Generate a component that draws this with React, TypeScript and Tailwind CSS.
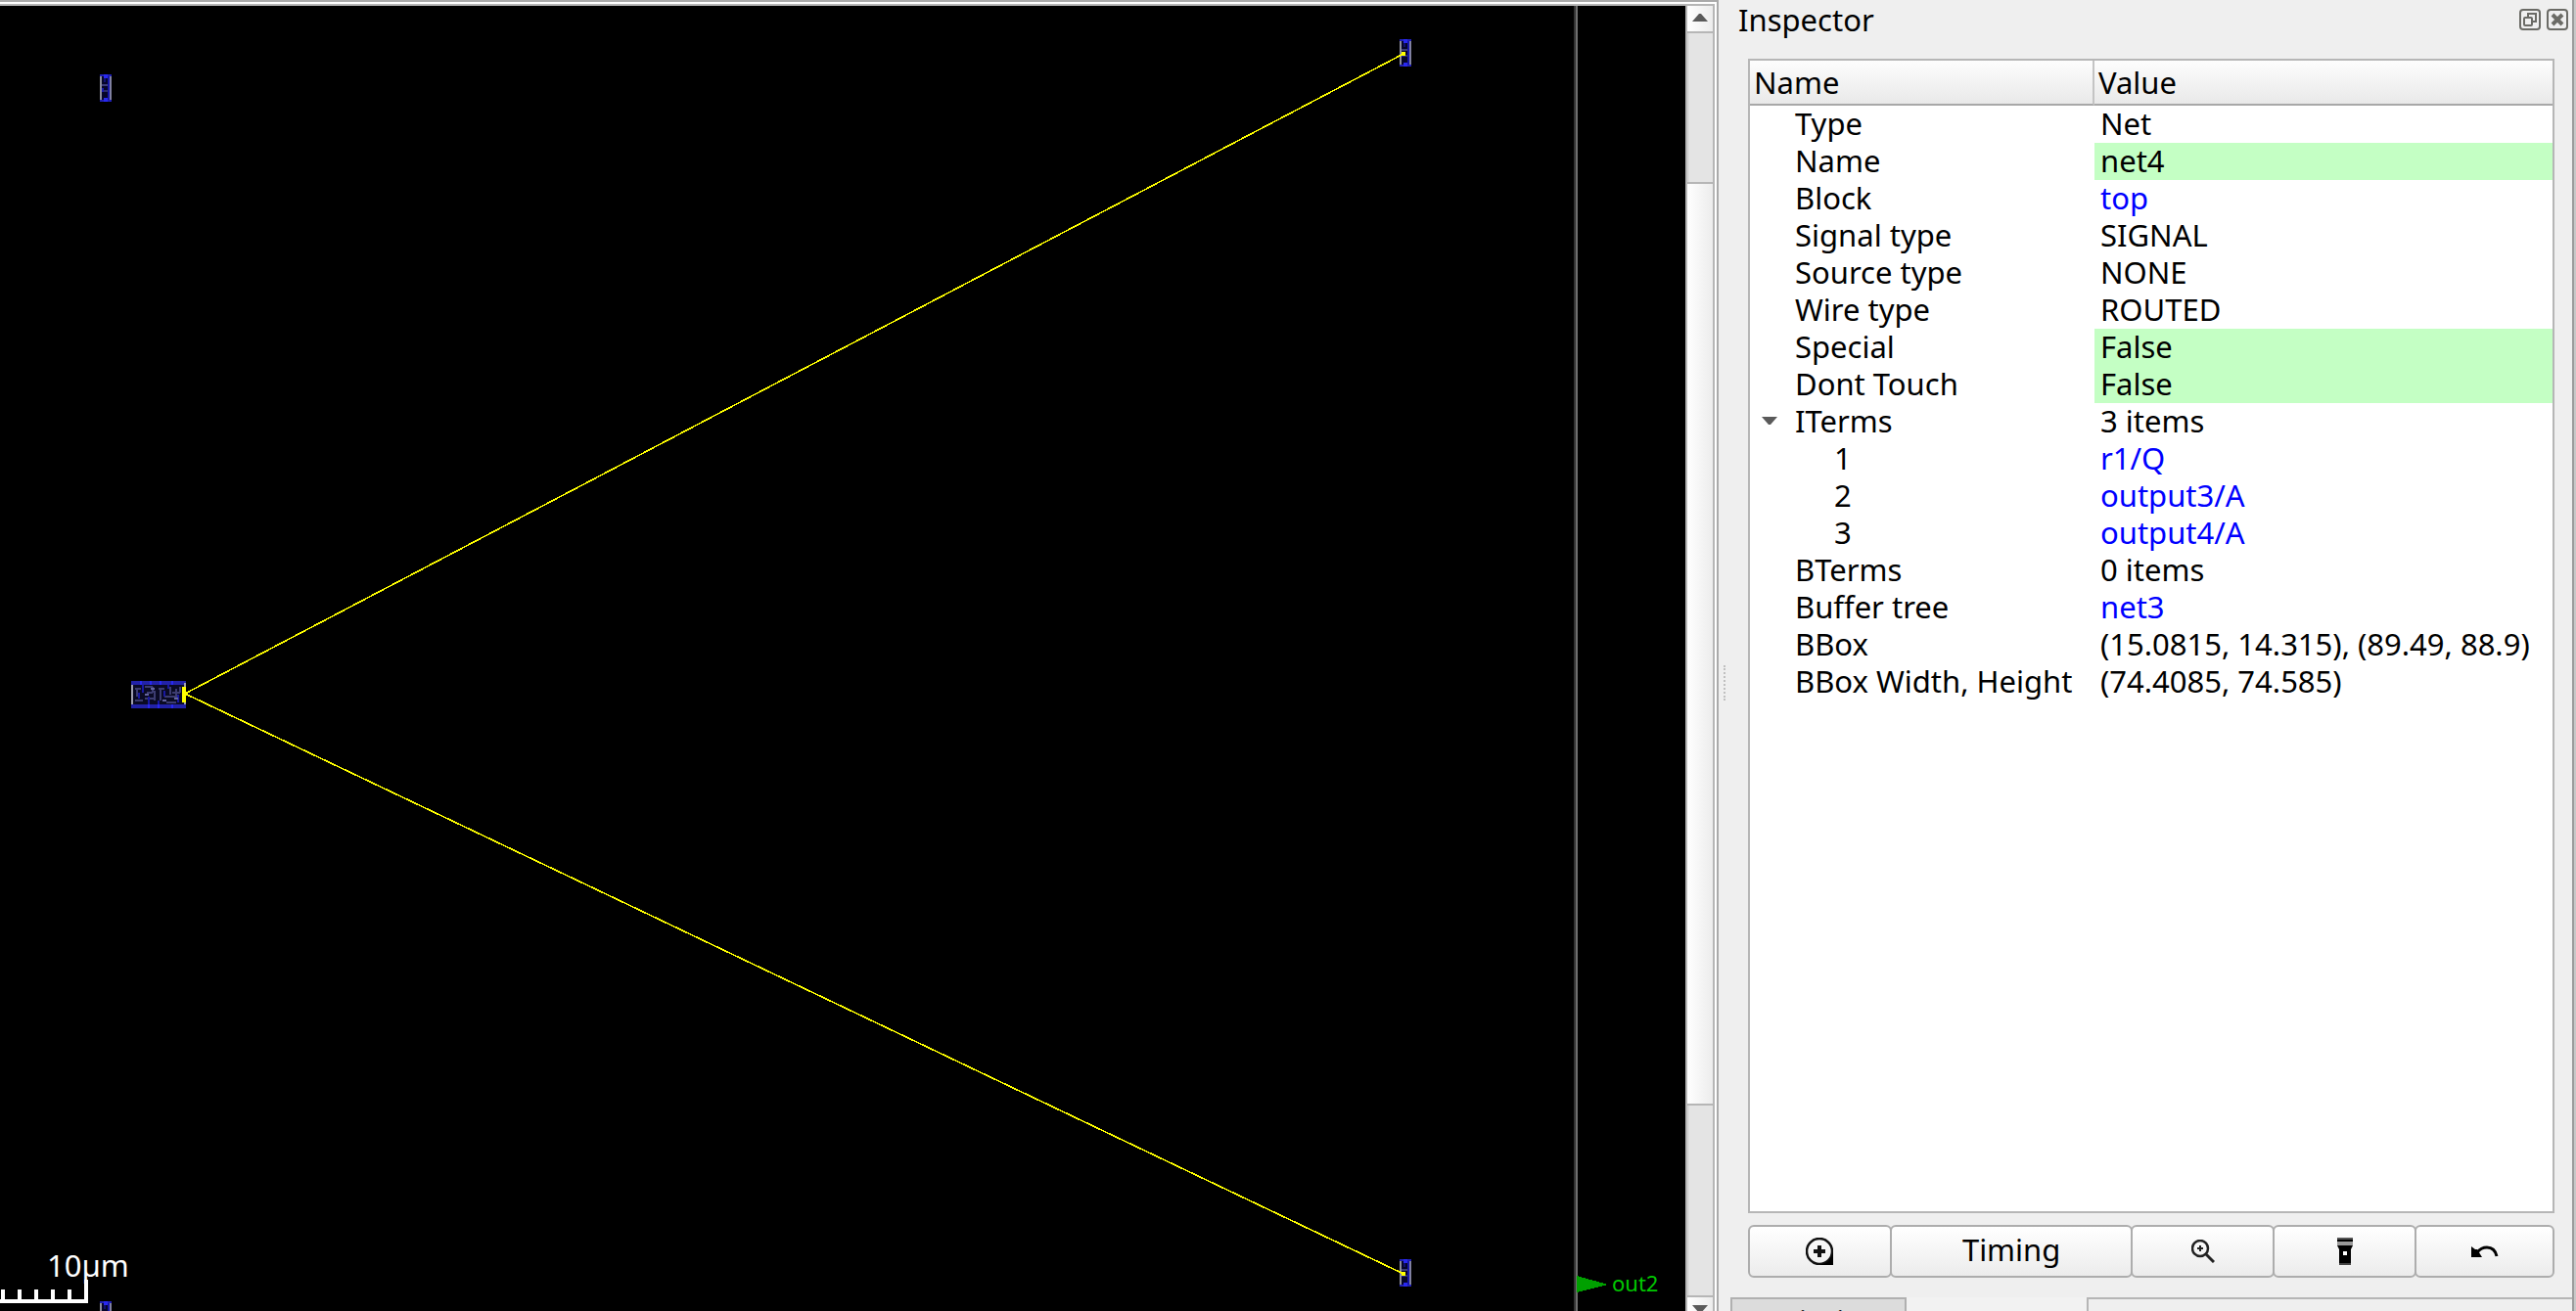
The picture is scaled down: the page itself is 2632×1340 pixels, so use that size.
import { useState } from 'react';
import type { ReactNode } from 'react';

type Row = {
  name: string;
  value: string;
  link?: boolean;
  editable?: boolean;
  child?: boolean;
  parent?: boolean;
};

const rows: Row[] = [
  { name: 'Type', value: 'Net' },
  { name: 'Name', value: 'net4', editable: true },
  { name: 'Block', value: 'top', link: true },
  { name: 'Signal type', value: 'SIGNAL' },
  { name: 'Source type', value: 'NONE' },
  { name: 'Wire type', value: 'ROUTED' },
  { name: 'Special', value: 'False', editable: true },
  { name: 'Dont Touch', value: 'False', editable: true },
  { name: 'ITerms', value: '3 items', parent: true },
  { name: '1', value: 'r1/Q', link: true, child: true },
  { name: '2', value: 'output3/A', link: true, child: true },
  { name: '3', value: 'output4/A', link: true, child: true },
  { name: 'BTerms', value: '0 items' },
  { name: 'Buffer tree', value: 'net3', link: true },
  { name: 'BBox', value: '(15.0815, 14.315), (89.49, 88.9)' },
  { name: 'BBox Width, Height', value: '(74.4085, 74.585)' },
];

/* Small buffer cell, 12 x 28 */
function Cell({ x, y }: { x: number; y: number }) {
  return (
    <g transform={`translate(${x} ${y})`}>
      <rect width="12" height="28" fill="#05052a" />
      <rect x="8" y="2" width="2" height="24" fill="#1414a8" />
      <rect x="4" y="4" width="2" height="4" fill="#10106e" />
      <rect x="2" y="10" width="6" height="2" fill="#3c3c78" />
      <rect x="2" y="14" width="2" height="4" fill="#1818b0" />
      <rect x="4" y="16" width="4" height="2" fill="#2c2c64" />
      <rect x="0" y="2" width="2" height="24" fill="#8c8c9c" />
      <rect x="10" y="2" width="2" height="24" fill="#8080a0" />
      <rect width="12" height="2" fill="#2020b4" />
      <rect y="26" width="12" height="2" fill="#2020b4" />
      <rect x="4" y="0" width="4" height="4" fill="#2828f0" />
      <rect x="4" y="24" width="4" height="4" fill="#2828f0" />
    </g>
  );
}

function FlipFlop({ x, y }: { x: number; y: number }) {
  return (
    <g transform={`translate(${x} ${y})`}>
      <rect width="56" height="28" fill="#0a0a24" />
      <path d="M4 8h6M6 8v8M4 20h8M14 6h8M16 12h6M22 6v6M14 18h10M24 10v10M28 8h6M30 8v12M34 16h12M40 6v8M46 8v10M36 22h10M50 6v6M42 12h8" stroke="#3c3c70" strokeWidth="2" fill="none" />
      <path d="M12 4v8M18 16v8M28 20v4M38 4v4M34 10v6M48 14v8M8 12v6" stroke="#1818a0" strokeWidth="2" fill="none" />
      <path d="M14 14h4M20 8h4M32 20h4M44 18h4" stroke="#6464a0" strokeWidth="2" fill="none" />
      <rect width="56" height="4" fill="#2222a8" />
      <rect y="24" width="56" height="4" fill="#2222a8" />
      <path d="M10 0v4M20 0v4M30 0v4M42 0v4M18 24v4M28 24v4M42 24v4" stroke="#2828f0" strokeWidth="2" />
      <rect y="4" width="2" height="20" fill="#a0a0b0" />
      <rect x="54" y="2" width="2" height="22" fill="#a0a0b0" />
      <rect x="52" y="6" width="4" height="16" fill="#ffff00" />
    </g>
  );
}

function LayoutView() {
  return (
    <svg className="block h-full w-full bg-black" role="img" aria-label="Chip layout" shapeRendering="crispEdges">
      <g transform="translate(0 -6)">
        <Cell x={102} y={76} />
        <Cell x={102} y={1330} />
        <Cell x={1430} y={40} />
        <Cell x={1430} y={1287} />
        <FlipFlop x={134} y={696} />
        <path d="M189 709L1434 55M189 709L1434 1302" stroke="#ffff00" strokeWidth="1.6" fill="none" />
        <path d="M1432 53h4v4h-4zM1432 1300h4v4h-4z" fill="#ffff00" />
        <rect x="1608" y="6" width="2" height="1334" fill="#333333" />
        <rect x="1610" y="6" width="2" height="1334" fill="#6e6e6e" />
        <path d="M1611 1304L1643 1313L1611 1321z" fill="#00a000" />
        <text x="1647" y="1320" fontSize="22" fill="#00c800">out2</text>
        <path d="M3 1318v10M20 1318v10M37 1318v10M54 1318v10M71 1318v10M88 1308v20" stroke="#ffffff" strokeWidth="4" />
        <rect x="0" y="1328" width="90" height="4" fill="#ffffff" />
        <text x="48" y="1305" fontSize="31" fill="#ffffff">10µm</text>
      </g>
    </svg>
  );
}

function Arrow({ down }: { down?: boolean }) {
  return (
    <svg width="16" height="8" viewBox="0 0 16 8" aria-hidden="true">
      <path d={down ? 'M0 0H16L9 8H7Z' : 'M0 8H16L9 0H7Z'} fill="#5a5a5a" />
    </svg>
  );
}

function ScrollBar() {
  return (
    <div className="flex w-7 flex-none flex-col border-l-2 border-[#b6b6b6]">
      <button aria-label="Scroll up" className="flex h-7 flex-none items-start justify-center border-b-2 border-[#b6b6b6] bg-linear-to-r from-white to-[#ececec] pt-2">
        <Arrow />
      </button>
      <div className="flex-[152] border-l-2 border-[#d8d8d8] bg-[#e4e4e4]" />
      <button aria-label="Scroll position" className="flex-[940] border-y-2 border-[#b6b6b6] bg-linear-to-r from-white to-[#ececec]" />
      <div className="flex-[194] border-l-2 border-[#d8d8d8] bg-[#e4e4e4]" />
      <button aria-label="Scroll down" className="flex h-4 flex-none items-start justify-center overflow-hidden border-t-2 border-[#b6b6b6] bg-linear-to-r from-white to-[#ececec] pt-2">
        <Arrow down />
      </button>
    </div>
  );
}

function ActionButton({ label, wide, children }: { label: string; wide?: boolean; children: ReactNode }) {
  return (
    <button
      aria-label={label}
      className={
        (wide ? 'flex-[250]' : 'flex-[146] last:flex-[142]') +
        ' -ml-0.5 flex h-[54px] items-center justify-center rounded-md border-2 border-[#adadad] bg-linear-to-b from-white to-[#ececec] first:ml-0'
      }
    >
      {children}
    </button>
  );
}

export default function App() {
  const [open, setOpen] = useState(true);

  return (
    <div className="flex h-screen overflow-hidden bg-[#efefef] font-['Noto_Sans',sans-serif] text-[31px] leading-[38px] text-black">
      <main className="flex min-w-0 flex-1 border-t-2 border-r-2 border-[#aaaaaa] bg-white pt-0.5 pr-0.5">
        <div className="flex min-w-0 flex-1 border-t-2 border-r-2 border-[#b6b6b6]">
          <div className="min-w-0 flex-1">
            <LayoutView />
          </div>
          <ScrollBar />
        </div>
      </main>

      <div className="flex w-3 flex-none items-center justify-center pt-14">
        <div className="h-9 border-l-2 border-dotted border-[#c0c0c0]" />
      </div>

      <aside className="flex w-[864px] flex-none">
        <div className="flex min-w-0 flex-1 flex-col">
          <header className="flex h-10 flex-none items-center pr-1 pl-2">
            <h1 className="flex-1 leading-10">Inspector</h1>
            <div className="flex gap-1.5">
              <button aria-label="Float panel">
                <svg width="22" height="22" viewBox="0 0 22 22" fill="none" stroke="#6b6b66" strokeWidth="2">
                  <rect x="1" y="1" width="20" height="20" rx="3" />
                  <path d="M9 8V5h8v8h-3" />
                  <rect x="5" y="9" width="8" height="8" rx="1" />
                </svg>
              </button>
              <button aria-label="Close panel">
                <svg width="22" height="22" viewBox="0 0 22 22" fill="none" stroke="#6b6b66" strokeWidth="2">
                  <rect x="1" y="1" width="20" height="20" rx="3" />
                  <path d="M6 6l10 10M16 6L6 16" strokeWidth="4" />
                </svg>
              </button>
            </div>
          </header>

          <div className="mt-5 mr-[18px] ml-[18px] min-h-0 flex-1 overflow-hidden border-2 border-[#b6b6b6] bg-white">
            <table className="w-full table-fixed border-separate border-spacing-0 text-left">
              <colgroup>
                <col className="w-[352px]" />
                <col />
              </colgroup>
              <thead>
                <tr className="bg-linear-to-b from-[#fdfdfd] to-[#e8e8e8]">
                  <th className="h-[46px] border-r-2 border-b-2 border-r-[#c4c4c4] border-b-[#a8a8a8] p-0 pl-1 font-normal">Name</th>
                  <th className="h-[46px] border-b-2 border-b-[#a8a8a8] p-0 pl-1 font-normal">Value</th>
                </tr>
              </thead>
              <tbody>
                {rows
                  .filter((r) => open || !r.child)
                  .map((r) => (
                    <tr key={r.name}>
                      <td className={'h-[38px] p-0 leading-9 whitespace-nowrap pb-0.5 ' + (r.child ? 'pl-[86px]' : '')}>
                        {r.child ? (
                          r.name
                        ) : (
                          <div className="flex">
                            <div className="flex w-[46px] flex-none pl-3">
                              {r.parent && (
                                <button aria-label="Toggle ITerms" aria-expanded={open} onClick={() => setOpen(!open)}>
                                  <Arrow down />
                                </button>
                              )}
                            </div>
                            {r.name}
                          </div>
                        )}
                      </td>
                      <td className={'h-[38px] p-0 pb-0.5 pl-1.5 leading-9 whitespace-nowrap ' + (r.editable ? 'bg-[#c4ffc4]' : '')}>
                        {r.link ? (
                          <a href="#" className="text-[#0000ff]">
                            {r.value}
                          </a>
                        ) : (
                          r.value
                        )}
                      </td>
                    </tr>
                  ))}
              </tbody>
            </table>
          </div>

          <div className="mt-3 mr-[18px] ml-[18px] flex flex-none">
            <ActionButton label="Zoom to selection">
              <svg width="28" height="28" viewBox="0 0 28 28" fill="none" stroke="#111111">
                <circle cx="14" cy="14" r="13" strokeWidth="2.5" />
                <path d="M28 14V28H14Q26 26 28 14Z" fill="#000000" stroke="none" />
                <path d="M14 8v12M8 14h12" strokeWidth="4" />
              </svg>
            </ActionButton>
            <ActionButton label="Timing" wide>
              <span className="pb-1">Timing</span>
            </ActionButton>
            <ActionButton label="Zoom in">
              <svg width="24" height="24" viewBox="0 0 24 24" fill="none" stroke="#222222">
                <circle cx="9" cy="9" r="8" strokeWidth="2.5" />
                <path d="M9 6v6M6 9h6" strokeWidth="2" />
                <path d="M14 14l9 9" strokeWidth="3" />
              </svg>
            </ActionButton>
            <ActionButton label="Highlight">
              <svg width="16" height="28" viewBox="0 0 16 28">
                <rect width="16" height="2" fill="#555555" />
                <rect y="2" width="16" height="2" fill="#000000" />
                <rect y="4" width="16" height="4" fill="#999999" />
                <path d="M0 8H16L14 12V28H2V12Z" fill="#000000" />
                <rect x="6" y="14" width="4" height="4" fill="#ffffff" />
                <rect x="2" y="26" width="12" height="2" fill="#444444" />
              </svg>
            </ActionButton>
            <ActionButton label="Back">
              <svg width="28" height="12" viewBox="0 0 28 12" fill="none">
                <path d="M0 1L4 4L6 4L11 12H0Z" fill="#000000" />
                <path d="M6 7Q10 2 16 2Q24 2 26 11" stroke="#000000" strokeWidth="3" />
              </svg>
            </ActionButton>
          </div>

          <div role="tablist" className="mt-5 flex h-3.5 flex-none items-start overflow-hidden">
            <button role="tab" className="h-12 w-[180px] border-2 border-[#b0b0b0] bg-[#dcdcdc]">
              Scripting
            </button>
            <button role="tab" aria-selected="true" aria-label="Inspector" className="h-12 w-[184px] bg-[#f2f2f2]" />
            <div className="h-12 flex-1 border-t-2 border-l-2 border-[#b6b6b6]" />
          </div>
        </div>
        <div className="w-1 border-l-2 border-[#9c9c9c] bg-[#c8c8c8]" />
      </aside>
    </div>
  );
}
